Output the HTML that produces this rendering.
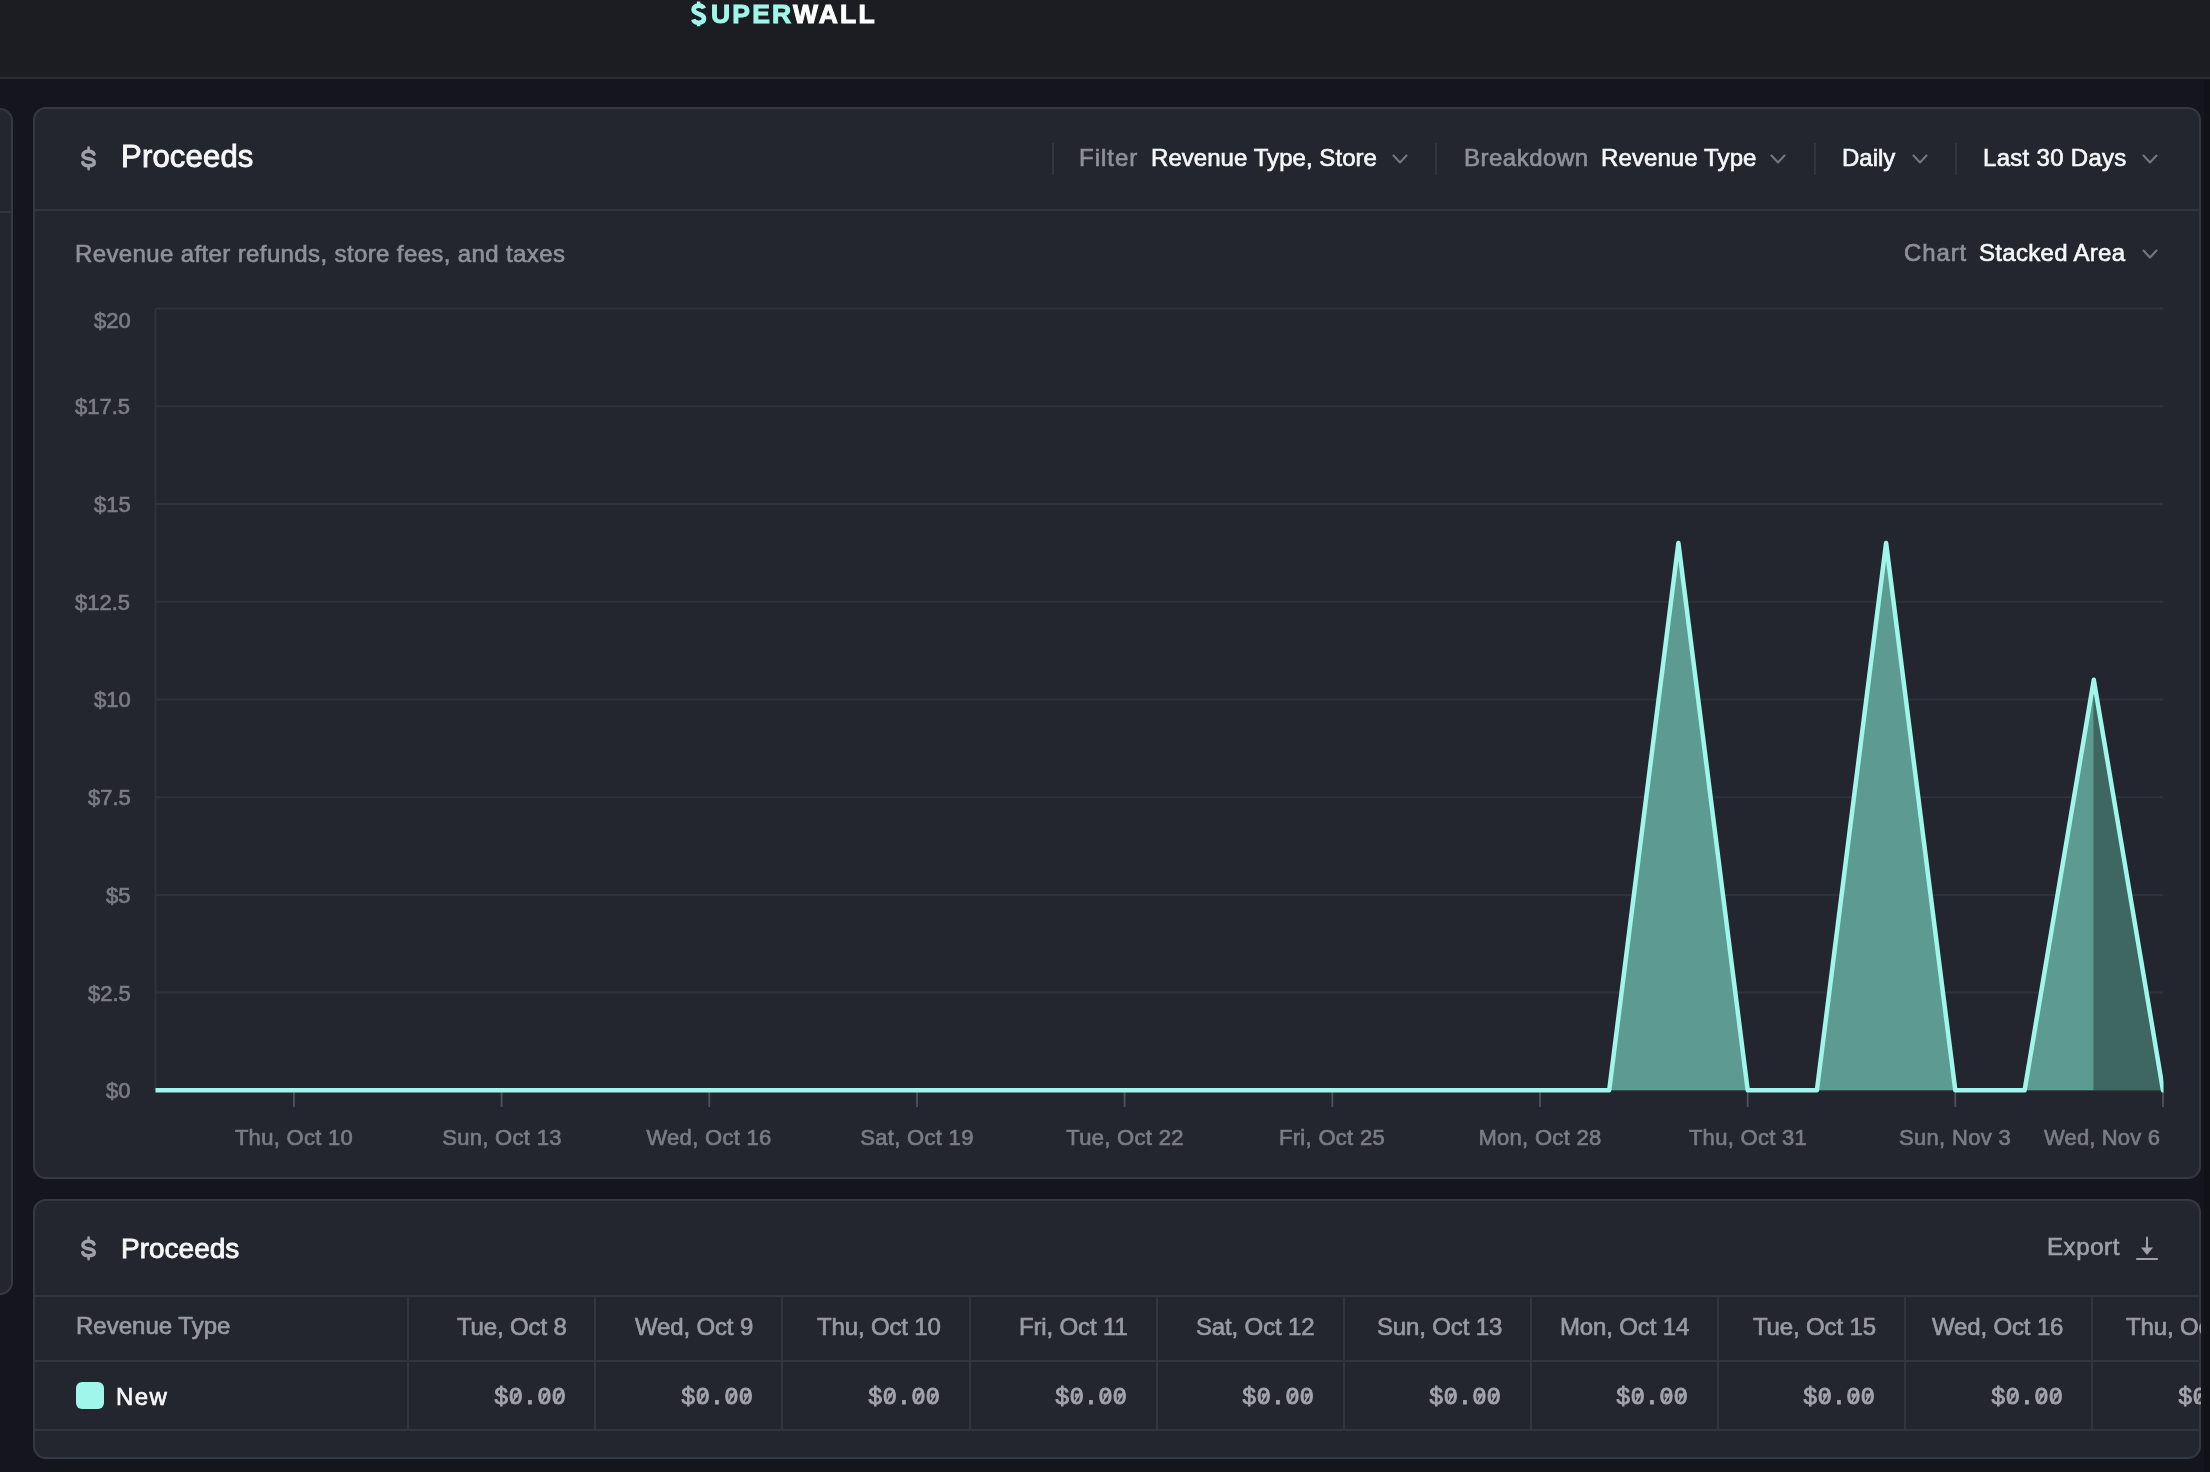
<!DOCTYPE html>
<html><head><meta charset="utf-8"><style>
html,body{margin:0;padding:0;width:2210px;height:1472px;overflow:hidden;background:#15161d;}
body{position:relative;font-family:'Liberation Sans', sans-serif;}
.t{position:absolute;white-space:pre;-webkit-text-stroke:0.65px currentColor;will-change:transform;}
.a{position:absolute;display:block;}
.box{position:absolute;box-sizing:border-box;}
</style></head><body>
<div class="box" style="left:0;top:0;width:2210px;height:79px;background:#1c1d22;border-bottom:2px solid #2c2d33"></div>
<svg class="a" style="left:686px;top:0px" width="26" height="30" viewBox="0 0 26 30"><path d="M17.8 8.6 C17.1 6.6 15.2 5.6 12.6 5.6 C9.4 5.6 7.6 7.2 7.6 9.6 C7.6 12.3 10 13.1 12.6 13.9 C15.4 14.8 18 15.5 18 18.6 C18 21.3 15.9 22.8 12.6 22.8 C9.8 22.8 7.9 21.6 7.3 19.4" fill="none" stroke="#a0f6ea" stroke-width="4.6" stroke-linecap="butt"/><path d="M12.6 1.4 V6 M12.6 22 V26.3" stroke="#a0f6ea" stroke-width="3.4"/></svg>
<div class="t" style="left:710.5px;top:1.48px;font-size:26.5px;line-height:26.5px;font-weight:700;letter-spacing:2.2px;-webkit-text-stroke:1px currentColor;color:#ffffff"><span style="color:#a0f6ea">UPER</span>WALL</div>
<div class="box" style="left:-40px;top:108px;width:53px;height:1187px;background:#24262f;border:2px solid #363841;border-radius:13px"></div>
<div class="box" style="left:0;top:210.5px;width:12px;height:2px;background:#33353d"></div>
<div class="box" style="left:33px;top:107px;height:1072px;background:#24262f;border:2px solid #363841;border-radius:13px;width:2168px"></div>
<div class="box" style="left:35px;top:208.5px;width:2164px;height:2px;background:#33353d"></div>
<svg class="a" style="left:76px;top:142px" width="26" height="32" viewBox="0 0 26 32"><path d="M18 12.2 C17.3 10.3 15.2 9.3 12.6 9.3 C9.2 9.3 6.9 11 6.9 13.2 C6.9 15.6 9.3 16.2 12.6 16.8 C16 17.4 18.3 18.2 18.3 20.5 C18.3 22.6 16 23.7 12.6 23.7 C9.6 23.7 7.4 22.6 6.7 20.6" fill="none" stroke="#9fa0a8" stroke-width="3.5" stroke-linecap="round"/><path d="M12.6 5.6 V9.3 M12.6 23.7 V27.3" stroke="#9fa0a8" stroke-width="2.6" stroke-linecap="round"/></svg>
<div class="t" style="left:121px;top:141.45px;font-size:31px;line-height:31px;color:#f7f7f9;font-weight:400;letter-spacing:0.2px;font-family:'Liberation Sans', sans-serif;-webkit-text-stroke:0.9px currentColor;">Proceeds</div>
<div class="box" style="left:1052px;top:143px;width:2px;height:32px;background:#33353d"></div>
<div class="box" style="left:1435px;top:143px;width:2px;height:32px;background:#33353d"></div>
<div class="box" style="left:1814px;top:143px;width:2px;height:32px;background:#33353d"></div>
<div class="box" style="left:1955px;top:143px;width:2px;height:32px;background:#33353d"></div>
<div class="t" style="left:1079px;top:145.90px;font-size:24px;line-height:24px;color:#8f9099;font-weight:400;letter-spacing:1.0px;font-family:'Liberation Sans', sans-serif;">Filter</div>
<div class="t" style="left:1151px;top:145.90px;font-size:24px;line-height:24px;color:#f7f7f9;font-weight:400;letter-spacing:0.05px;font-family:'Liberation Sans', sans-serif;">Revenue Type, Store</div>
<svg class="a" style="left:1392px;top:153.5px" width="16" height="11" viewBox="0 0 16 11"><path d="M1.5 1.5 L8 8.5 L14.5 1.5" fill="none" stroke="#74757d" stroke-width="2.1" stroke-linecap="round" stroke-linejoin="round"/></svg>
<div class="t" style="left:1464px;top:145.90px;font-size:24px;line-height:24px;color:#8f9099;font-weight:400;letter-spacing:0.5px;font-family:'Liberation Sans', sans-serif;">Breakdown</div>
<div class="t" style="left:1601px;top:145.90px;font-size:24px;line-height:24px;color:#f7f7f9;font-weight:400;letter-spacing:0.1px;font-family:'Liberation Sans', sans-serif;">Revenue Type</div>
<svg class="a" style="left:1770px;top:153.5px" width="16" height="11" viewBox="0 0 16 11"><path d="M1.5 1.5 L8 8.5 L14.5 1.5" fill="none" stroke="#74757d" stroke-width="2.1" stroke-linecap="round" stroke-linejoin="round"/></svg>
<div class="t" style="left:1842px;top:145.90px;font-size:24px;line-height:24px;color:#f7f7f9;font-weight:400;font-family:'Liberation Sans', sans-serif;">Daily</div>
<svg class="a" style="left:1912px;top:153.5px" width="16" height="11" viewBox="0 0 16 11"><path d="M1.5 1.5 L8 8.5 L14.5 1.5" fill="none" stroke="#74757d" stroke-width="2.1" stroke-linecap="round" stroke-linejoin="round"/></svg>
<div class="t" style="left:1983px;top:145.90px;font-size:24px;line-height:24px;color:#f7f7f9;font-weight:400;letter-spacing:0.3px;font-family:'Liberation Sans', sans-serif;">Last 30 Days</div>
<svg class="a" style="left:2142px;top:153.5px" width="16" height="11" viewBox="0 0 16 11"><path d="M1.5 1.5 L8 8.5 L14.5 1.5" fill="none" stroke="#74757d" stroke-width="2.1" stroke-linecap="round" stroke-linejoin="round"/></svg>
<div class="t" style="left:75px;top:241.80px;font-size:24px;line-height:24px;color:#8f9099;font-weight:400;letter-spacing:0.38px;font-family:'Liberation Sans', sans-serif;">Revenue after refunds, store fees, and taxes</div>
<div class="t" style="left:1904px;top:241.40px;font-size:24px;line-height:24px;color:#8f9099;font-weight:400;letter-spacing:0.9px;font-family:'Liberation Sans', sans-serif;">Chart</div>
<div class="t" style="left:1979px;top:241.40px;font-size:24px;line-height:24px;color:#f7f7f9;font-weight:400;letter-spacing:0.3px;font-family:'Liberation Sans', sans-serif;">Stacked Area</div>
<svg class="a" style="left:2142px;top:249px" width="16" height="11" viewBox="0 0 16 11"><path d="M1.5 1.5 L8 8.5 L14.5 1.5" fill="none" stroke="#74757d" stroke-width="2.1" stroke-linecap="round" stroke-linejoin="round"/></svg>
<svg class="a" style="left:0;top:0" width="2210" height="1472" viewBox="0 0 2210 1472"><defs><clipPath id="cp"><rect x="155.5" y="280" width="2008" height="900"/></clipPath></defs><line x1="155.5" y1="308.5" x2="2163" y2="308.5" stroke="#2f323a" stroke-width="2"/><line x1="155.5" y1="406.2" x2="2163" y2="406.2" stroke="#2f323a" stroke-width="2"/><line x1="155.5" y1="504.0" x2="2163" y2="504.0" stroke="#2f323a" stroke-width="2"/><line x1="155.5" y1="601.7" x2="2163" y2="601.7" stroke="#2f323a" stroke-width="2"/><line x1="155.5" y1="699.4" x2="2163" y2="699.4" stroke="#2f323a" stroke-width="2"/><line x1="155.5" y1="797.2" x2="2163" y2="797.2" stroke="#2f323a" stroke-width="2"/><line x1="155.5" y1="894.9" x2="2163" y2="894.9" stroke="#2f323a" stroke-width="2"/><line x1="155.5" y1="992.6" x2="2163" y2="992.6" stroke="#2f323a" stroke-width="2"/><line x1="155.5" y1="1090.3" x2="2163" y2="1090.3" stroke="#2f323a" stroke-width="2"/><line x1="155.5" y1="308.5" x2="155.5" y2="1090.3" stroke="#2f323a" stroke-width="2"/><line x1="293.9" y1="1090" x2="293.9" y2="1107" stroke="#50525a" stroke-width="1.8"/><line x1="501.6" y1="1090" x2="501.6" y2="1107" stroke="#50525a" stroke-width="1.8"/><line x1="709.3" y1="1090" x2="709.3" y2="1107" stroke="#50525a" stroke-width="1.8"/><line x1="917.0" y1="1090" x2="917.0" y2="1107" stroke="#50525a" stroke-width="1.8"/><line x1="1124.6" y1="1090" x2="1124.6" y2="1107" stroke="#50525a" stroke-width="1.8"/><line x1="1332.3" y1="1090" x2="1332.3" y2="1107" stroke="#50525a" stroke-width="1.8"/><line x1="1540.0" y1="1090" x2="1540.0" y2="1107" stroke="#50525a" stroke-width="1.8"/><line x1="1747.7" y1="1090" x2="1747.7" y2="1107" stroke="#50525a" stroke-width="1.8"/><line x1="1955.3" y1="1090" x2="1955.3" y2="1107" stroke="#50525a" stroke-width="1.8"/><line x1="2163.0" y1="1090" x2="2163.0" y2="1107" stroke="#50525a" stroke-width="1.8"/><polygon points="155.5,1090.3 224.7,1090.3 293.9,1090.3 363.2,1090.3 432.4,1090.3 501.6,1090.3 570.8,1090.3 640.1,1090.3 709.3,1090.3 778.5,1090.3 847.7,1090.3 917.0,1090.3 986.2,1090.3 1055.4,1090.3 1124.6,1090.3 1193.9,1090.3 1263.1,1090.3 1332.3,1090.3 1401.5,1090.3 1470.8,1090.3 1540.0,1090.3 1609.2,1090.3 1678.4,543.0 1747.7,1090.3 1816.9,1090.3 1886.1,543.0 1955.3,1090.3 2024.6,1090.3 2093.8,679.8 2093.8,1090.3" fill="#5d9a91"/><polygon points="2093.8,679.8 2163.0,1090.3 2093.8,1090.3" fill="#3e6761"/><polyline points="155.5,1090.3 224.7,1090.3 293.9,1090.3 363.2,1090.3 432.4,1090.3 501.6,1090.3 570.8,1090.3 640.1,1090.3 709.3,1090.3 778.5,1090.3 847.7,1090.3 917.0,1090.3 986.2,1090.3 1055.4,1090.3 1124.6,1090.3 1193.9,1090.3 1263.1,1090.3 1332.3,1090.3 1401.5,1090.3 1470.8,1090.3 1540.0,1090.3 1609.2,1090.3 1678.4,543.0 1747.7,1090.3 1816.9,1090.3 1886.1,543.0 1955.3,1090.3 2024.6,1090.3 2093.8,679.8 2163.0,1090.3" fill="none" stroke="#a0f6ea" stroke-width="4.5" stroke-linejoin="round" stroke-linecap="round" clip-path="url(#cp)"/></svg>
<div class="t" style="right:2079.5px;top:310.39px;font-size:22px;line-height:22px;color:#7b7c84;font-weight:400;font-family:'Liberation Sans', sans-serif;">$20</div>
<div class="t" style="right:2079.5px;top:396.12px;font-size:22px;line-height:22px;color:#7b7c84;font-weight:400;font-family:'Liberation Sans', sans-serif;">$17.5</div>
<div class="t" style="right:2079.5px;top:493.85px;font-size:22px;line-height:22px;color:#7b7c84;font-weight:400;font-family:'Liberation Sans', sans-serif;">$15</div>
<div class="t" style="right:2079.5px;top:591.58px;font-size:22px;line-height:22px;color:#7b7c84;font-weight:400;font-family:'Liberation Sans', sans-serif;">$12.5</div>
<div class="t" style="right:2079.5px;top:689.31px;font-size:22px;line-height:22px;color:#7b7c84;font-weight:400;font-family:'Liberation Sans', sans-serif;">$10</div>
<div class="t" style="right:2079.5px;top:787.04px;font-size:22px;line-height:22px;color:#7b7c84;font-weight:400;font-family:'Liberation Sans', sans-serif;">$7.5</div>
<div class="t" style="right:2079.5px;top:884.77px;font-size:22px;line-height:22px;color:#7b7c84;font-weight:400;font-family:'Liberation Sans', sans-serif;">$5</div>
<div class="t" style="right:2079.5px;top:982.50px;font-size:22px;line-height:22px;color:#7b7c84;font-weight:400;font-family:'Liberation Sans', sans-serif;">$2.5</div>
<div class="t" style="right:2079.5px;top:1080.23px;font-size:22px;line-height:22px;color:#7b7c84;font-weight:400;font-family:'Liberation Sans', sans-serif;">$0</div>
<div class="t" style="left:-6.051724137931046px;width:600px;text-align:center;top:1126.80px;font-size:22px;line-height:22px;color:#7b7c84;font-weight:400;letter-spacing:0.3px;font-family:'Liberation Sans', sans-serif;">Thu, Oct 10</div>
<div class="t" style="left:201.62068965517238px;width:600px;text-align:center;top:1126.80px;font-size:22px;line-height:22px;color:#7b7c84;font-weight:400;letter-spacing:0.3px;font-family:'Liberation Sans', sans-serif;">Sun, Oct 13</div>
<div class="t" style="left:409.2931034482758px;width:600px;text-align:center;top:1126.80px;font-size:22px;line-height:22px;color:#7b7c84;font-weight:400;letter-spacing:0.3px;font-family:'Liberation Sans', sans-serif;">Wed, Oct 16</div>
<div class="t" style="left:616.9655172413793px;width:600px;text-align:center;top:1126.80px;font-size:22px;line-height:22px;color:#7b7c84;font-weight:400;letter-spacing:0.3px;font-family:'Liberation Sans', sans-serif;">Sat, Oct 19</div>
<div class="t" style="left:824.6379310344828px;width:600px;text-align:center;top:1126.80px;font-size:22px;line-height:22px;color:#7b7c84;font-weight:400;letter-spacing:0.3px;font-family:'Liberation Sans', sans-serif;">Tue, Oct 22</div>
<div class="t" style="left:1032.310344827586px;width:600px;text-align:center;top:1126.80px;font-size:22px;line-height:22px;color:#7b7c84;font-weight:400;letter-spacing:0.3px;font-family:'Liberation Sans', sans-serif;">Fri, Oct 25</div>
<div class="t" style="left:1239.9827586206895px;width:600px;text-align:center;top:1126.80px;font-size:22px;line-height:22px;color:#7b7c84;font-weight:400;letter-spacing:0.3px;font-family:'Liberation Sans', sans-serif;">Mon, Oct 28</div>
<div class="t" style="left:1447.655172413793px;width:600px;text-align:center;top:1126.80px;font-size:22px;line-height:22px;color:#7b7c84;font-weight:400;letter-spacing:0.3px;font-family:'Liberation Sans', sans-serif;">Thu, Oct 31</div>
<div class="t" style="left:1655.3275862068963px;width:600px;text-align:center;top:1126.80px;font-size:22px;line-height:22px;color:#7b7c84;font-weight:400;letter-spacing:0.3px;font-family:'Liberation Sans', sans-serif;">Sun, Nov 3</div>
<div class="t" style="right:50px;top:1126.80px;font-size:22px;line-height:22px;color:#7b7c84;font-weight:400;letter-spacing:0.15px;font-family:'Liberation Sans', sans-serif;">Wed, Nov 6</div>
<div class="box" style="left:33px;top:1199px;width:2168px;height:260px;background:#24262f;border:2px solid #363841;border-radius:13px"></div>
<svg class="a" style="left:76px;top:1231.5px" width="26" height="32" viewBox="0 0 26 32"><path d="M18 12.2 C17.3 10.3 15.2 9.3 12.6 9.3 C9.2 9.3 6.9 11 6.9 13.2 C6.9 15.6 9.3 16.2 12.6 16.8 C16 17.4 18.3 18.2 18.3 20.5 C18.3 22.6 16 23.7 12.6 23.7 C9.6 23.7 7.4 22.6 6.7 20.6" fill="none" stroke="#9fa0a8" stroke-width="3.5" stroke-linecap="round"/><path d="M12.6 5.6 V9.3 M12.6 23.7 V27.3" stroke="#9fa0a8" stroke-width="2.6" stroke-linecap="round"/></svg>
<div class="t" style="left:121px;top:1234.60px;font-size:28px;line-height:28px;color:#f7f7f9;font-weight:400;font-family:'Liberation Sans', sans-serif;-webkit-text-stroke:0.85px currentColor;">Proceeds</div>
<div class="t" style="left:2047px;top:1234.60px;font-size:24px;line-height:24px;color:#9fa0a8;font-weight:400;letter-spacing:0.6px;font-family:'Liberation Sans', sans-serif;">Export</div>
<svg class="a" style="left:2134px;top:1235px" width="26" height="27" viewBox="0 0 26 27"><path d="M13 2.5 V16" stroke="#9fa0a8" stroke-width="2" stroke-linecap="round"/><path d="M7 12.5 L13 20 L19 12.5 Z" fill="#9fa0a8"/><path d="M3 24 H23" stroke="#9fa0a8" stroke-width="2.2" stroke-linecap="round"/></svg>
<div class="box" style="left:35px;top:1295px;width:2164px;height:2px;background:#33353d"></div>
<div class="box" style="left:35px;top:1359.5px;width:2164px;height:2px;background:#33353d"></div>
<div class="box" style="left:35px;top:1429px;width:2164px;height:2px;background:#33353d"></div>
<div class="box" style="left:407.2px;top:1296px;width:2px;height:134px;background:#33353d"></div>
<div class="box" style="left:594.3px;top:1296px;width:2px;height:134px;background:#33353d"></div>
<div class="box" style="left:781.4px;top:1296px;width:2px;height:134px;background:#33353d"></div>
<div class="box" style="left:968.5px;top:1296px;width:2px;height:134px;background:#33353d"></div>
<div class="box" style="left:1155.6px;top:1296px;width:2px;height:134px;background:#33353d"></div>
<div class="box" style="left:1342.7px;top:1296px;width:2px;height:134px;background:#33353d"></div>
<div class="box" style="left:1529.8px;top:1296px;width:2px;height:134px;background:#33353d"></div>
<div class="box" style="left:1716.9px;top:1296px;width:2px;height:134px;background:#33353d"></div>
<div class="box" style="left:1904.0px;top:1296px;width:2px;height:134px;background:#33353d"></div>
<div class="box" style="left:2091.1px;top:1296px;width:2px;height:134px;background:#33353d"></div>
<div class="t" style="left:75.5px;top:1314.40px;font-size:24px;line-height:24px;color:#9a9ba2;font-weight:400;font-family:'Liberation Sans', sans-serif;">Revenue Type</div>
<div class="t" style="right:1643.7px;top:1314.90px;font-size:24px;line-height:24px;color:#9a9ba2;font-weight:400;letter-spacing:-0.15px;font-family:'Liberation Sans', sans-serif;">Tue, Oct 8</div>
<div class="t" style="right:1644.2px;top:1386.10px;font-size:24px;line-height:24px;color:#a3a4ab;font-weight:400;font-family:'Liberation Mono', monospace;-webkit-text-stroke:0.9px currentColor;">$0.00</div>
<svg class="a" style="left:508.2px;top:1388px" width="15" height="19" viewBox="0 0 15 19"><path d="M3.6 15.5 L10.8 3.8" stroke="#a3a4ab" stroke-width="1.7"/></svg>
<svg class="a" style="left:537.0px;top:1388px" width="15" height="19" viewBox="0 0 15 19"><path d="M3.6 15.5 L10.8 3.8" stroke="#a3a4ab" stroke-width="1.7"/></svg>
<svg class="a" style="left:551.4px;top:1388px" width="15" height="19" viewBox="0 0 15 19"><path d="M3.6 15.5 L10.8 3.8" stroke="#a3a4ab" stroke-width="1.7"/></svg>
<div class="t" style="right:1456.6px;top:1314.90px;font-size:24px;line-height:24px;color:#9a9ba2;font-weight:400;letter-spacing:-0.15px;font-family:'Liberation Sans', sans-serif;">Wed, Oct 9</div>
<div class="t" style="right:1457.1px;top:1386.10px;font-size:24px;line-height:24px;color:#a3a4ab;font-weight:400;font-family:'Liberation Mono', monospace;-webkit-text-stroke:0.9px currentColor;">$0.00</div>
<svg class="a" style="left:695.3px;top:1388px" width="15" height="19" viewBox="0 0 15 19"><path d="M3.6 15.5 L10.8 3.8" stroke="#a3a4ab" stroke-width="1.7"/></svg>
<svg class="a" style="left:724.1px;top:1388px" width="15" height="19" viewBox="0 0 15 19"><path d="M3.6 15.5 L10.8 3.8" stroke="#a3a4ab" stroke-width="1.7"/></svg>
<svg class="a" style="left:738.5px;top:1388px" width="15" height="19" viewBox="0 0 15 19"><path d="M3.6 15.5 L10.8 3.8" stroke="#a3a4ab" stroke-width="1.7"/></svg>
<div class="t" style="right:1269.5px;top:1314.90px;font-size:24px;line-height:24px;color:#9a9ba2;font-weight:400;letter-spacing:-0.15px;font-family:'Liberation Sans', sans-serif;">Thu, Oct 10</div>
<div class="t" style="right:1270.0px;top:1386.10px;font-size:24px;line-height:24px;color:#a3a4ab;font-weight:400;font-family:'Liberation Mono', monospace;-webkit-text-stroke:0.9px currentColor;">$0.00</div>
<svg class="a" style="left:882.4px;top:1388px" width="15" height="19" viewBox="0 0 15 19"><path d="M3.6 15.5 L10.8 3.8" stroke="#a3a4ab" stroke-width="1.7"/></svg>
<svg class="a" style="left:911.2px;top:1388px" width="15" height="19" viewBox="0 0 15 19"><path d="M3.6 15.5 L10.8 3.8" stroke="#a3a4ab" stroke-width="1.7"/></svg>
<svg class="a" style="left:925.6px;top:1388px" width="15" height="19" viewBox="0 0 15 19"><path d="M3.6 15.5 L10.8 3.8" stroke="#a3a4ab" stroke-width="1.7"/></svg>
<div class="t" style="right:1082.4px;top:1314.90px;font-size:24px;line-height:24px;color:#9a9ba2;font-weight:400;letter-spacing:-0.15px;font-family:'Liberation Sans', sans-serif;">Fri, Oct 11</div>
<div class="t" style="right:1082.9px;top:1386.10px;font-size:24px;line-height:24px;color:#a3a4ab;font-weight:400;font-family:'Liberation Mono', monospace;-webkit-text-stroke:0.9px currentColor;">$0.00</div>
<svg class="a" style="left:1069.5px;top:1388px" width="15" height="19" viewBox="0 0 15 19"><path d="M3.6 15.5 L10.8 3.8" stroke="#a3a4ab" stroke-width="1.7"/></svg>
<svg class="a" style="left:1098.3px;top:1388px" width="15" height="19" viewBox="0 0 15 19"><path d="M3.6 15.5 L10.8 3.8" stroke="#a3a4ab" stroke-width="1.7"/></svg>
<svg class="a" style="left:1112.7px;top:1388px" width="15" height="19" viewBox="0 0 15 19"><path d="M3.6 15.5 L10.8 3.8" stroke="#a3a4ab" stroke-width="1.7"/></svg>
<div class="t" style="right:895.3000000000002px;top:1314.90px;font-size:24px;line-height:24px;color:#9a9ba2;font-weight:400;letter-spacing:-0.15px;font-family:'Liberation Sans', sans-serif;">Sat, Oct 12</div>
<div class="t" style="right:895.8000000000002px;top:1386.10px;font-size:24px;line-height:24px;color:#a3a4ab;font-weight:400;font-family:'Liberation Mono', monospace;-webkit-text-stroke:0.9px currentColor;">$0.00</div>
<svg class="a" style="left:1256.6px;top:1388px" width="15" height="19" viewBox="0 0 15 19"><path d="M3.6 15.5 L10.8 3.8" stroke="#a3a4ab" stroke-width="1.7"/></svg>
<svg class="a" style="left:1285.4px;top:1388px" width="15" height="19" viewBox="0 0 15 19"><path d="M3.6 15.5 L10.8 3.8" stroke="#a3a4ab" stroke-width="1.7"/></svg>
<svg class="a" style="left:1299.8px;top:1388px" width="15" height="19" viewBox="0 0 15 19"><path d="M3.6 15.5 L10.8 3.8" stroke="#a3a4ab" stroke-width="1.7"/></svg>
<div class="t" style="right:708.2px;top:1314.90px;font-size:24px;line-height:24px;color:#9a9ba2;font-weight:400;letter-spacing:-0.15px;font-family:'Liberation Sans', sans-serif;">Sun, Oct 13</div>
<div class="t" style="right:708.7px;top:1386.10px;font-size:24px;line-height:24px;color:#a3a4ab;font-weight:400;font-family:'Liberation Mono', monospace;-webkit-text-stroke:0.9px currentColor;">$0.00</div>
<svg class="a" style="left:1443.7px;top:1388px" width="15" height="19" viewBox="0 0 15 19"><path d="M3.6 15.5 L10.8 3.8" stroke="#a3a4ab" stroke-width="1.7"/></svg>
<svg class="a" style="left:1472.5px;top:1388px" width="15" height="19" viewBox="0 0 15 19"><path d="M3.6 15.5 L10.8 3.8" stroke="#a3a4ab" stroke-width="1.7"/></svg>
<svg class="a" style="left:1486.9px;top:1388px" width="15" height="19" viewBox="0 0 15 19"><path d="M3.6 15.5 L10.8 3.8" stroke="#a3a4ab" stroke-width="1.7"/></svg>
<div class="t" style="right:521.1000000000001px;top:1314.90px;font-size:24px;line-height:24px;color:#9a9ba2;font-weight:400;letter-spacing:-0.15px;font-family:'Liberation Sans', sans-serif;">Mon, Oct 14</div>
<div class="t" style="right:521.6000000000001px;top:1386.10px;font-size:24px;line-height:24px;color:#a3a4ab;font-weight:400;font-family:'Liberation Mono', monospace;-webkit-text-stroke:0.9px currentColor;">$0.00</div>
<svg class="a" style="left:1630.8px;top:1388px" width="15" height="19" viewBox="0 0 15 19"><path d="M3.6 15.5 L10.8 3.8" stroke="#a3a4ab" stroke-width="1.7"/></svg>
<svg class="a" style="left:1659.6px;top:1388px" width="15" height="19" viewBox="0 0 15 19"><path d="M3.6 15.5 L10.8 3.8" stroke="#a3a4ab" stroke-width="1.7"/></svg>
<svg class="a" style="left:1674.0px;top:1388px" width="15" height="19" viewBox="0 0 15 19"><path d="M3.6 15.5 L10.8 3.8" stroke="#a3a4ab" stroke-width="1.7"/></svg>
<div class="t" style="right:334.0px;top:1314.90px;font-size:24px;line-height:24px;color:#9a9ba2;font-weight:400;letter-spacing:-0.15px;font-family:'Liberation Sans', sans-serif;">Tue, Oct 15</div>
<div class="t" style="right:334.5px;top:1386.10px;font-size:24px;line-height:24px;color:#a3a4ab;font-weight:400;font-family:'Liberation Mono', monospace;-webkit-text-stroke:0.9px currentColor;">$0.00</div>
<svg class="a" style="left:1817.9px;top:1388px" width="15" height="19" viewBox="0 0 15 19"><path d="M3.6 15.5 L10.8 3.8" stroke="#a3a4ab" stroke-width="1.7"/></svg>
<svg class="a" style="left:1846.7px;top:1388px" width="15" height="19" viewBox="0 0 15 19"><path d="M3.6 15.5 L10.8 3.8" stroke="#a3a4ab" stroke-width="1.7"/></svg>
<svg class="a" style="left:1861.1px;top:1388px" width="15" height="19" viewBox="0 0 15 19"><path d="M3.6 15.5 L10.8 3.8" stroke="#a3a4ab" stroke-width="1.7"/></svg>
<div class="t" style="right:146.9000000000001px;top:1314.90px;font-size:24px;line-height:24px;color:#9a9ba2;font-weight:400;letter-spacing:-0.15px;font-family:'Liberation Sans', sans-serif;">Wed, Oct 16</div>
<div class="t" style="right:147.4000000000001px;top:1386.10px;font-size:24px;line-height:24px;color:#a3a4ab;font-weight:400;font-family:'Liberation Mono', monospace;-webkit-text-stroke:0.9px currentColor;">$0.00</div>
<svg class="a" style="left:2005.0px;top:1388px" width="15" height="19" viewBox="0 0 15 19"><path d="M3.6 15.5 L10.8 3.8" stroke="#a3a4ab" stroke-width="1.7"/></svg>
<svg class="a" style="left:2033.8px;top:1388px" width="15" height="19" viewBox="0 0 15 19"><path d="M3.6 15.5 L10.8 3.8" stroke="#a3a4ab" stroke-width="1.7"/></svg>
<svg class="a" style="left:2048.2px;top:1388px" width="15" height="19" viewBox="0 0 15 19"><path d="M3.6 15.5 L10.8 3.8" stroke="#a3a4ab" stroke-width="1.7"/></svg>
<div class="t" style="right:-40.19999999999982px;top:1314.90px;font-size:24px;line-height:24px;color:#9a9ba2;font-weight:400;letter-spacing:-0.15px;font-family:'Liberation Sans', sans-serif;">Thu, Oct 17</div>
<div class="t" style="right:-39.69999999999982px;top:1386.10px;font-size:24px;line-height:24px;color:#a3a4ab;font-weight:400;font-family:'Liberation Mono', monospace;-webkit-text-stroke:0.9px currentColor;">$0.00</div>
<svg class="a" style="left:2192.1px;top:1388px" width="15" height="19" viewBox="0 0 15 19"><path d="M3.6 15.5 L10.8 3.8" stroke="#a3a4ab" stroke-width="1.7"/></svg>
<svg class="a" style="left:2220.9px;top:1388px" width="15" height="19" viewBox="0 0 15 19"><path d="M3.6 15.5 L10.8 3.8" stroke="#a3a4ab" stroke-width="1.7"/></svg>
<svg class="a" style="left:2235.3px;top:1388px" width="15" height="19" viewBox="0 0 15 19"><path d="M3.6 15.5 L10.8 3.8" stroke="#a3a4ab" stroke-width="1.7"/></svg>
<div class="box" style="left:75.5px;top:1381.8px;width:28px;height:27px;background:#a0f6ea;border-radius:6px"></div>
<div class="t" style="left:116px;top:1385.00px;font-size:24px;line-height:24px;color:#f7f7f9;font-weight:400;letter-spacing:1.4px;font-family:'Liberation Sans', sans-serif;">New</div>
<div class="box" style="left:2201px;top:1190px;width:9px;height:282px;background:#15161d"></div>
<div class="box" style="left:2204px;top:80px;width:6px;height:1392px;background:#111218"></div>
</body></html>
